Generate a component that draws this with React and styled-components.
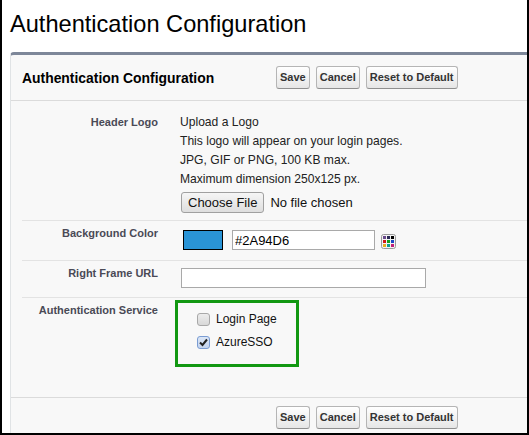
import React from "react";
import styled, { createGlobalStyle } from "styled-components";

const GlobalStyle = createGlobalStyle`
  html, body {
    margin: 0;
    padding: 0;
    background: #fff;
  }
  body {
    font-family: "Liberation Sans", Arial, sans-serif;
  }
`;

const Frame = styled.div`
  width: 529px;
  height: 435px;
  box-sizing: border-box;
  border-left: 2px solid #000;
  border-right: 2px solid #000;
  border-bottom: 2px solid #000;
  overflow: hidden;
  background: #fff;
`;

const PageTitle = styled.h1`
  margin: 0;
  padding: 10px 0 0 8px;
  font-size: 23.6px;
  font-weight: normal;
  line-height: 28px;
  color: #000;
`;

const Panel = styled.div`
  margin: 14px 0 0 8px;
  width: 560px;
  background: #f8f8f8;
  border: 1px solid #e0e3e5;
  border-top: 3px solid #7d8799;
  border-radius: 4px 0 0 0;
`;

const PanelHeader = styled.div`
  display: flex;
  align-items: center;
  height: 45px;
  padding-left: 11px;
  border-bottom: 1px solid #dbdbdb;
`;

const PanelTitle = styled.h2`
  margin: 0;
  width: 254px;
  flex: none;
  font-size: 13.9px;
  font-weight: bold;
  color: #000;
`;

const ButtonBar = styled.div`
  display: flex;
  gap: 6px;
`;

const Button = styled.button`
  font-family: "Liberation Sans", Arial, sans-serif;
  font-size: 11px;
  font-weight: bold;
  line-height: 13px;
  color: #333;
  padding: 4px 3px;
  border: 1px solid #b5b5b5;
  border-bottom-color: #8f8f8f;
  border-radius: 3px;
  background: linear-gradient(#ffffff, #f0f0f0 60%, #e6e6e6);
  cursor: pointer;
`;

const Footer = styled.div`
  display: flex;
  padding: 8px 0 10px 11px;
  border-top: 1px solid #dbdbdb;
`;

const Spacer = styled.div`
  width: 254px;
  flex: none;
`;

const Row = styled.div`
  display: flex;
  margin-left: 11px;
  border-bottom: ${(p) => (p.$last ? "none" : "1px solid #e3e3e3")};
`;

const Label = styled.div`
  box-sizing: border-box;
  width: 148px;
  flex: none;
  padding: ${(p) => p.$top}px 12px 0 0;
  text-align: right;
  font-size: 11px;
  font-weight: bold;
  line-height: 13px;
  color: #4a4a56;
`;

const Data = styled.div`
  flex: 1;
  padding: ${(p) => p.$top}px 0 ${(p) => p.$bottom}px 10px;
  font-size: 12.1px;
  line-height: 19px;
  color: #222;
`;

const Line = styled.div``;

const FileRow = styled.div`
  display: flex;
  align-items: center;
  gap: 6px;
  margin-top: 3px;
  font-size: 13px;
  color: #111;
`;

const FileButton = styled.button`
  font-family: "Liberation Sans", Arial, sans-serif;
  font-size: 13px;
  height: 21px;
  padding: 0 6px;
  margin-left: 1px;
  color: #111;
  border: 1px solid #a0a0a0;
  border-radius: 3px;
  background: linear-gradient(#f6f6f6, #dedede);
`;

const ColorRow = styled.div`
  display: flex;
  align-items: center;
  gap: 9px;
`;

const Swatch = styled.div`
  width: 38px;
  height: 18px;
  margin-left: 3px;
  background: ${(p) => p.$color};
  border: 1px solid #000;
`;

const TextInput = styled.input`
  box-sizing: border-box;
  width: ${(p) => p.$width}px;
  height: 20px;
  margin: 0 0 0 ${(p) => p.$left || 0}px;
  padding: 0 2px;
  font-family: "Liberation Sans", Arial, sans-serif;
  font-size: 13px;
  color: #000;
  background: #fff;
  border: 1px solid #a9a9a9;
  outline: none;
`;

const Picker = styled.svg`
  margin-left: -3px;
  margin-top: 3px;
`;

const Highlight = styled.div`
  box-sizing: border-box;
  width: 124px;
  height: 67px;
  margin-left: -5px;
  padding: 9px 0 0 19px;
  border: 3px solid #129812;
  display: flex;
  flex-direction: column;
  gap: 7px;
`;

const Option = styled.label`
  display: flex;
  align-items: center;
  gap: 6px;
  height: 16px;
  font-size: 12px;
  color: #111;
`;

const Box = styled.span`
  box-sizing: border-box;
  width: 13px;
  height: 13px;
  display: inline-flex;
  align-items: center;
  justify-content: center;
  border: 1px solid ${(p) => (p.$checked ? "#7a9cd3" : "#a8a8a8")};
  border-radius: 3px;
  background: ${(p) =>
    p.$checked
      ? "linear-gradient(#dbe6f6, #c4d4ee)"
      : "linear-gradient(#ececec, #d8d8d8)"};
`;

const PickerIcon = () => (
  <Picker width="15" height="15" viewBox="0 0 15 15">
    <rect x="0.5" y="0.5" width="14" height="14" rx="2" fill="#f4f4f4" stroke="#9a9a9a" />
    <rect x="2" y="2" width="3" height="3" fill="#6a4a8c" />
    <rect x="6" y="2" width="3" height="3" fill="#2a2a55" />
    <rect x="10" y="2" width="3" height="3" fill="#000" />
    <rect x="2" y="6" width="3" height="3" fill="#d01818" />
    <rect x="6" y="6" width="3" height="3" fill="#18a018" />
    <rect x="10" y="6" width="3" height="3" fill="#1848c8" />
    <rect x="2" y="10" width="3" height="3" fill="#e8b020" />
    <rect x="6" y="10" width="3" height="3" fill="#10a090" />
    <rect x="10" y="10" width="3" height="3" fill="#c02078" />
  </Picker>
);

const Checkbox = ({ checked }) => (
  <Box $checked={checked}>
    {checked && (
      <svg width="9" height="9" viewBox="0 0 9 9">
        <path d="M1 4.5 L3.5 7 L8 1.5" fill="none" stroke="#222" strokeWidth="2" />
      </svg>
    )}
  </Box>
);

const Buttons = () => (
  <ButtonBar>
    <Button>Save</Button>
    <Button>Cancel</Button>
    <Button>Reset to Default</Button>
  </ButtonBar>
);

export default function App() {
  return (
    <>
      <GlobalStyle />
      <Frame>
        <PageTitle>Authentication Configuration</PageTitle>
        <Panel>
          <PanelHeader>
            <PanelTitle>Authentication Configuration</PanelTitle>
            <Buttons />
          </PanelHeader>

          <Row>
            <Label $top={15}>Header Logo</Label>
            <Data $top={12} $bottom={7}>
              <Line>Upload a Logo</Line>
              <Line>This logo will appear on your login pages.</Line>
              <Line>JPG, GIF or PNG, 100 KB max.</Line>
              <Line>Maximum dimension 250x125 px.</Line>
              <FileRow>
                <FileButton>Choose File</FileButton>
                No file chosen
              </FileRow>
            </Data>
          </Row>

          <Row>
            <Label $top={6}>Background Color</Label>
            <Data $top={9} $bottom={10}>
              <ColorRow>
                <Swatch $color="#2a94d6" />
                <TextInput $width={143} defaultValue="#2A94D6" />
                <PickerIcon />
              </ColorRow>
            </Data>
          </Row>

          <Row>
            <Label $top={6}>Right Frame URL</Label>
            <Data $top={7} $bottom={8}>
              <TextInput $width={245} $left={1} />
            </Data>
          </Row>

          <Row $last>
            <Label $top={6}>Authentication Service</Label>
            <Data $top={2} $bottom={30}>
              <Highlight>
                <Option>
                  <Checkbox />
                  Login Page
                </Option>
                <Option>
                  <Checkbox checked />
                  AzureSSO
                </Option>
              </Highlight>
            </Data>
          </Row>

          <Footer>
            <Spacer />
            <Buttons />
          </Footer>
        </Panel>
      </Frame>
    </>
  );
}
